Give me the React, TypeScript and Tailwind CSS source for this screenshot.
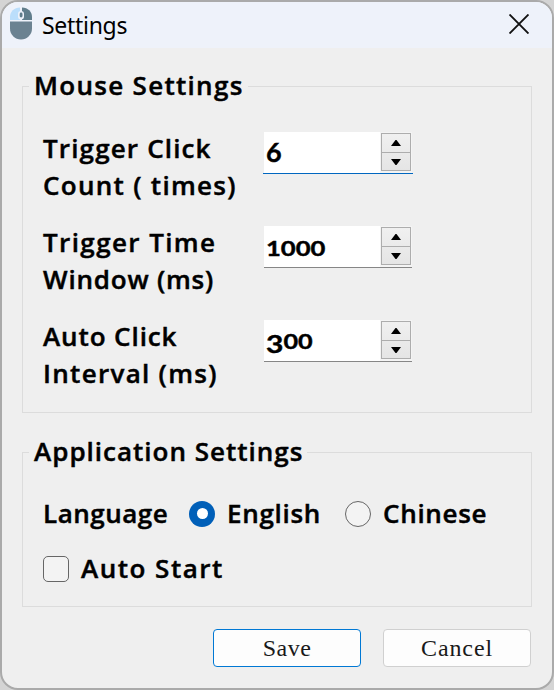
import type { ReactNode } from "react";

const LABEL = "font-['Open_Sans','Noto_Sans',sans-serif] font-semibold text-[26px] leading-[37px] text-black whitespace-nowrap [-webkit-text-stroke:0.45px_black]";

const DIGITS = "font-[Lato,sans-serif] leading-none font-bold [-webkit-text-stroke:0.4px_black]";

function MouseIcon() {
  return (
    <svg width="22" height="33" viewBox="0 0 22 33" className="block">
      <path d="M10 0.5V13H0V10C0 4.5 4 0.8 10 0.5Z" fill="#bbdefb" />
      <path d="M12 0.5V13H22V10C22 4.5 18 0.8 12 0.5Z" fill="#607d8b" />
      <path d="M0 14.5H22V21.5A11 11 0 0 1 0 21.5Z" fill="#6b8291" />
      <rect x="8" y="4" width="6" height="8.5" rx="3" fill="#eef2fa" />
      <rect x="9.7" y="5.5" width="2.8" height="5" rx="1.4" fill="#607d8b" />
    </svg>
  );
}

function Group({ title, children, className }: { title: ReactNode; children: ReactNode; className: string }) {
  return (
    <fieldset className={`border border-[#dcdcdc] ${className}`}>
      {title}
      {children}
    </fieldset>
  );
}

function StepButtons() {
  return (
    <div className="mt-px mr-px flex h-[38px] w-[30px] flex-col border border-[#adadad] bg-linear-to-b from-[#f0f0f0] to-[#e5e5e5]">
      <div className="flex h-[19px] items-center justify-center border-b border-[#adadad]">
        <svg width="10" height="6" viewBox="0 0 10 6"><path d="M0 6L4.5 0H5.5L10 6Z" fill="#000" /></svg>
      </div>
      <div className="flex h-[17px] items-center justify-center">
        <svg width="10" height="6" viewBox="0 0 10 6"><path d="M0 0L4.5 6H5.5L10 0Z" fill="#000" /></svg>
      </div>
    </div>
  );
}

function Spin({ children, active }: { children: ReactNode; active?: boolean }) {
  return (
    <div className="flex w-[148px] flex-col">
      <div className="flex h-[41px] justify-between bg-white">
        <div className="flex h-[41px] w-[116px] items-center pl-[2px] text-black">{children}</div>
        <div className="flex w-8 justify-end bg-[#f4f4f4]">
          <StepButtons />
        </div>
      </div>
      {active ? <div className="-mx-px h-px bg-[#0067c0]" /> : <div className="h-px bg-[#868686]" />}
    </div>
  );
}

export default function App() {
  return (
    <div className="h-[690px] w-[554px] overflow-hidden bg-[#d4d4d4]">
      <div className="flex h-[690px] w-[554px] flex-col overflow-hidden rounded-[18px] border-2 border-[#aaaaaa] bg-[#efefef]">
        <header className="flex h-[46px] shrink-0 items-center justify-between bg-[#eef2fa] pr-[23px] pl-2">
          <div className="flex items-center gap-[10px]">
            <div className="-mt-[3px]">
              <MouseIcon />
            </div>
            <span className="font-['Noto_Sans',sans-serif] text-[23px] leading-8 tracking-[-0.3px] text-black">Settings</span>
          </div>
          <svg width="20" height="20" viewBox="0 0 20 20" className="-mt-[2px]">
            <path d="M0.5 0.5L19.5 19.5M19.5 0.5L0.5 19.5" stroke="#111" strokeWidth="1.9" />
          </svg>
        </header>

        <main className="flex flex-col px-5 pt-5">
          <Group
            className="h-[345px] px-5"
            title={
              <legend className={`${LABEL} -ml-[14px] h-[37px] pr-[4px] pl-[5px] tracking-[1.3px]`}>
                <span className="-mt-px block">Mouse Settings</span>
              </legend>
            }
          >
            <div className="flex flex-col gap-5 pt-[25px]">
              <div className="flex h-[74px]">
                <div className={`${LABEL} w-[221px]`}>
                  <div className="tracking-[1.15px]">Trigger Click</div>
                  <div className="tracking-[1.3px]">Count ( times)</div>
                </div>
                <div className="pt-[2px]">
                  <Spin active>
                    <span className={`${DIGITS} inline-block -mt-[2px] text-[27px]`}>6</span>
                  </Spin>
                </div>
              </div>
              <div className="flex h-[74px]">
                <div className={`${LABEL} w-[221px]`}>
                  <div className="tracking-[1.4px]">Trigger Time</div>
                  <div className="tracking-[0.8px]">Window (ms)</div>
                </div>
                <div className="pt-[2px]">
                  <Spin>
                    <span className={`${DIGITS} inline-block origin-left scale-x-[1.22] pt-px text-[21px]`}>1000</span>
                  </Spin>
                </div>
              </div>
              <div className="flex h-[74px]">
                <div className={`${LABEL} w-[221px]`}>
                  <div className="tracking-[0.9px]">Auto Click</div>
                  <div className="tracking-[1.3px]">Interval (ms)</div>
                </div>
                <div className="pt-[2px]">
                  <Spin>
                    <span className={`${DIGITS} flex origin-left scale-x-[1.2] items-baseline text-[21px]`}>
                      <span className="-mt-2 -mb-2 inline-block translate-y-[4px] text-[25px] leading-none">3</span>
                      <span>00</span>
                    </span>
                  </Spin>
                </div>
              </div>
            </div>
          </Group>

          <Group
            className="mt-[21px] h-[173px] px-5"
            title={
              <legend className={`${LABEL} -ml-[14px] h-[37px] pr-[4px] pl-[5px] tracking-[1px]`}>
                <span className="-mt-px block">Application Settings</span>
              </legend>
            }
          >
            <div className="mt-[24px] flex h-[37px] items-center">
              <span className={`${LABEL} w-[146px] tracking-[0.5px]`}>Language</span>
              <span className="flex size-[26px] items-center justify-center rounded-full bg-[#005fb8]">
                <span className="size-[11px] rounded-full bg-white" />
              </span>
              <span className={`${LABEL} ml-3 w-[118px] tracking-[0.7px]`}>English</span>
              <span className="size-[26px] rounded-full border border-[#666] bg-[#f3f3f3]" />
              <span className={`${LABEL} ml-3 tracking-[0.7px]`}>Chinese</span>
            </div>
            <div className="mt-[18px] flex h-[37px] items-center">
              <span className="size-[26px] rounded-[5px] border border-[#666] bg-[#f3f3f3]" />
              <span className={`${LABEL} ml-3 tracking-[1.5px]`}>Auto Start</span>
            </div>
          </Group>

          <div className="mt-[22px] flex justify-end gap-[22px] pr-px">
            <button className="h-[38px] w-[148px] rounded-[4px] border border-[#0078d4] bg-[#fdfdfd] font-['Liberation_Serif',serif] text-[24px] leading-none tracking-[0.5px] text-[#1a1a1a]">
              Save
            </button>
            <button className="h-[38px] w-[148px] rounded-[4px] border border-[#d0d0d0] bg-[#fdfdfd] font-['Liberation_Serif',serif] text-[24px] leading-none tracking-[0.9px] text-[#1a1a1a]">
              Cancel
            </button>
          </div>
        </main>
      </div>
    </div>
  );
}
